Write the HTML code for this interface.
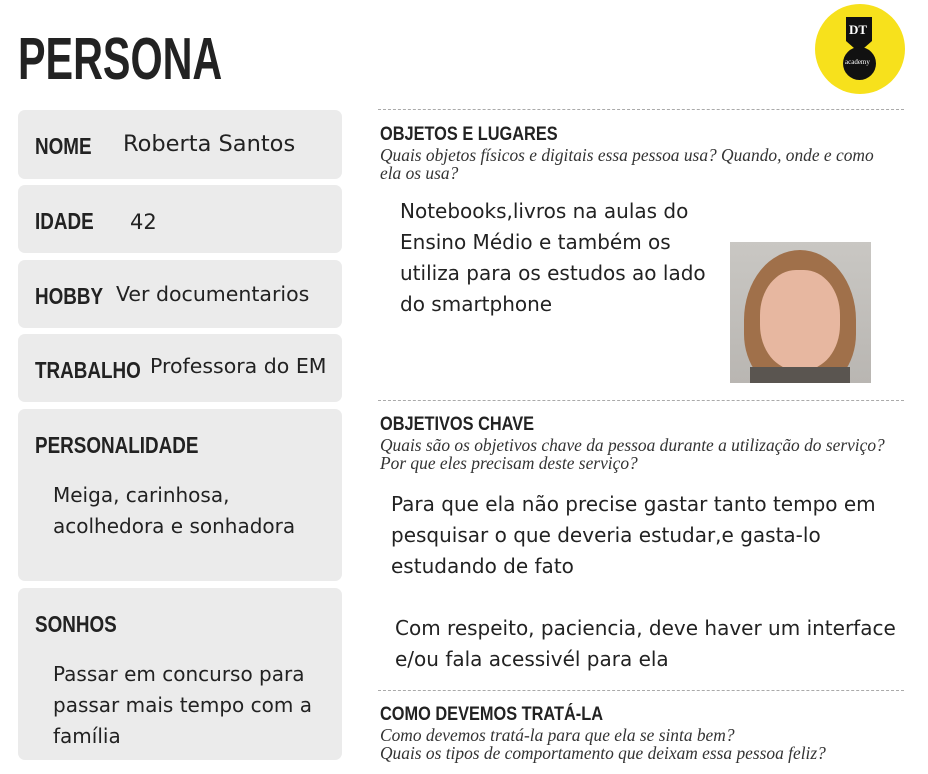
<!DOCTYPE html>
<html><head><meta charset="utf-8"><style>
body{margin:0;width:928px;height:774px;background:#fff;position:relative;overflow:hidden;font-family:"Liberation Sans","DejaVu Sans",sans-serif;color:#1a1a1a}
.a{position:absolute}
.h{font-family:"Liberation Sans",sans-serif;font-weight:bold;color:#222;transform-origin:0 0;white-space:nowrap}
.card{position:absolute;left:18px;width:324px;background:#ebebeb;border-radius:7px}
.t{font-size:21px;font-family:"DejaVu Sans","Liberation Sans",sans-serif;color:#222;white-space:nowrap}
.q{font-family:"Liberation Serif",serif;font-style:italic;font-size:17.4px;color:#333;line-height:18px;white-space:nowrap}
.dash{position:absolute;left:378px;width:526px;border-top:1.5px dashed #aaa}
.l{font-size:23px;transform:scaleX(0.82)}
.s{font-size:19px;transform:scaleX(0.86)}
</style></head><body>
<div class="a h" style="left:18px;top:25px;font-size:59px;transform:scaleX(0.7)">PERSONA</div>
<div class="a" style="left:815px;top:4px;width:90px;height:90px;border-radius:50%;background:#f7e11c"></div>
<div class="a" style="left:846px;top:17px;width:26px;height:32px;background:#111;clip-path:polygon(0 0,100% 0,100% 75%,65% 100%,35% 100%,0 75%)"></div>
<div class="a" style="left:849px;top:22px;color:#fff;font:bold 13px 'Liberation Serif',serif">DT</div>
<div class="a" style="left:843px;top:47px;width:33px;height:33px;border-radius:50%;background:#111"></div>
<div class="a" style="left:845px;top:58px;color:#fff;font:7px 'Liberation Serif',serif">academy</div>

<div class="card" style="top:110px;height:69px"></div>
<div class="a h l" style="left:35px;top:133px">NOME</div>
<div class="a t" style="left:123px;top:131px;font-size:22.5px">Roberta Santos</div>
<div class="card" style="top:185px;height:68px"></div>
<div class="a h l" style="left:35px;top:208px">IDADE</div>
<div class="a t" style="left:130px;top:210px">42</div>
<div class="card" style="top:260px;height:68px"></div>
<div class="a h l" style="left:35px;top:283px">HOBBY</div>
<div class="a t" style="left:116px;top:282px;font-size:20.5px">Ver documentarios</div>
<div class="card" style="top:334px;height:68px"></div>
<div class="a h l" style="left:35px;top:357px">TRABALHO</div>
<div class="a t" style="left:150px;top:354px;font-size:20.5px">Professora do EM</div>
<div class="card" style="top:409px;height:172px"></div>
<div class="a h l" style="left:35px;top:432px">PERSONALIDADE</div>
<div class="a t" style="left:53px;top:480px;font-size:20px;line-height:31px">Meiga, carinhosa,<br>acolhedora e sonhadora</div>
<div class="card" style="top:588px;height:172px"></div>
<div class="a h l" style="left:35px;top:611px">SONHOS</div>
<div class="a t" style="left:53px;top:659px;font-size:20px;line-height:31px">Passar em concurso para<br>passar mais tempo com a<br>família</div>

<div class="dash" style="top:109px"></div>
<div class="a h s" style="left:380px;top:124px">OBJETOS E LUGARES</div>
<div class="a q" style="left:380px;top:146px">Quais objetos físicos e digitais essa pessoa usa? Quando, onde e como<br>ela os usa?</div>
<div class="a t" style="left:400px;top:196px;font-size:20px;line-height:31px">Notebooks,livros na aulas do<br>Ensino Médio e também os<br>utiliza para os estudos ao lado<br>do smartphone</div>
<div class="a" style="left:730px;top:242px;width:141px;height:141px;background:linear-gradient(180deg,#c9c7c3,#b9b6b2);overflow:hidden">
<div class="a" style="left:14px;top:8px;width:112px;height:140px;border-radius:50% 50% 40% 40%;background:#a0704a"></div>
<div class="a" style="left:30px;top:28px;width:80px;height:100px;border-radius:45%;background:#e7b7a0"></div>
<div class="a" style="left:20px;top:125px;width:100px;height:30px;background:#5a5550"></div>
</div>

<div class="dash" style="top:400px"></div>
<div class="a h s" style="left:380px;top:414px">OBJETIVOS CHAVE</div>
<div class="a q" style="left:380px;top:436px">Quais são os objetivos chave da pessoa durante a utilização do serviço?<br>Por que eles precisam deste serviço?</div>
<div class="a t" style="left:391px;top:489px;font-size:20px;line-height:31px">Para que ela não precise gastar tanto tempo em<br>pesquisar o que deveria estudar,e gasta-lo<br>estudando de fato</div>
<div class="a t" style="left:395px;top:613px;font-size:20px;line-height:31px">Com respeito, paciencia, deve haver um interface<br>e/ou fala acessivél para ela</div>

<div class="dash" style="top:690px"></div>
<div class="a h s" style="left:380px;top:704px">COMO DEVEMOS TRATÁ-LA</div>
<div class="a q" style="left:380px;top:726px">Como devemos tratá-la para que ela se sinta bem?<br>Quais os tipos de comportamento que deixam essa pessoa feliz?</div>
</body></html>
